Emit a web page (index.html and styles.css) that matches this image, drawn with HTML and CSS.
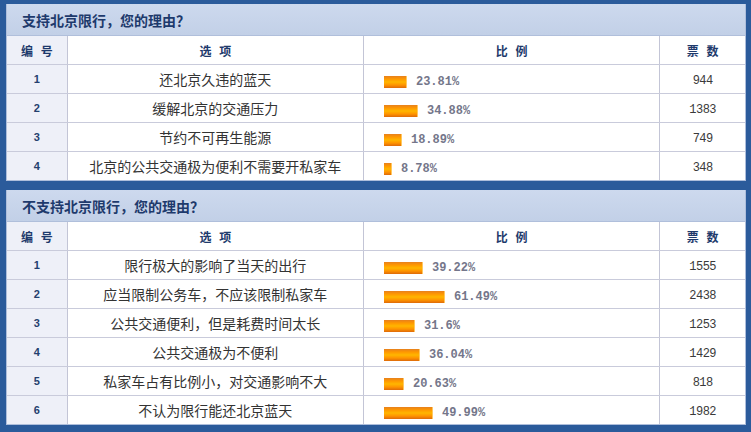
FILE: index.html
```html
<!DOCTYPE html>
<html lang="zh-CN">
<head>
<meta charset="utf-8">
<title>北京限行调查</title>
<link rel="stylesheet" href="styles.css">
</head>
<body>
<div class="page">
  <section class="poll">
    <h2 class="poll-title">支持北京限行，您的理由？</h2>
    <table class="poll-table">
      <colgroup><col class="col-no"><col class="col-opt"><col class="col-ratio"><col class="col-votes"></colgroup>
      <thead>
        <tr><th class="c-no">编 号</th><th>选 项</th><th>比 例</th><th>票 数</th></tr>
      </thead>
      <tbody>
        <tr><td class="c-no">1</td><td class="c-opt">还北京久违的蓝天</td><td class="c-ratio"><span class="bar" style="width:23px"></span><span class="pct">23.81%</span></td><td class="c-votes">944</td></tr>
        <tr><td class="c-no">2</td><td class="c-opt">缓解北京的交通压力</td><td class="c-ratio"><span class="bar" style="width:34px"></span><span class="pct">34.88%</span></td><td class="c-votes">1383</td></tr>
        <tr><td class="c-no">3</td><td class="c-opt">节约不可再生能源</td><td class="c-ratio"><span class="bar" style="width:18px"></span><span class="pct">18.89%</span></td><td class="c-votes">749</td></tr>
        <tr><td class="c-no">4</td><td class="c-opt">北京的公共交通极为便利不需要开私家车</td><td class="c-ratio"><span class="bar" style="width:8px"></span><span class="pct">8.78%</span></td><td class="c-votes">348</td></tr>
      </tbody>
    </table>
  </section>
  <section class="poll">
    <h2 class="poll-title">不支持北京限行，您的理由？</h2>
    <table class="poll-table">
      <colgroup><col class="col-no"><col class="col-opt"><col class="col-ratio"><col class="col-votes"></colgroup>
      <thead>
        <tr><th class="c-no">编 号</th><th>选 项</th><th>比 例</th><th>票 数</th></tr>
      </thead>
      <tbody>
        <tr><td class="c-no">1</td><td class="c-opt">限行极大的影响了当天的出行</td><td class="c-ratio"><span class="bar" style="width:39px"></span><span class="pct">39.22%</span></td><td class="c-votes">1555</td></tr>
        <tr><td class="c-no">2</td><td class="c-opt">应当限制公务车，不应该限制私家车</td><td class="c-ratio"><span class="bar" style="width:61px"></span><span class="pct">61.49%</span></td><td class="c-votes">2438</td></tr>
        <tr><td class="c-no">3</td><td class="c-opt">公共交通便利，但是耗费时间太长</td><td class="c-ratio"><span class="bar" style="width:31px"></span><span class="pct">31.6%</span></td><td class="c-votes">1253</td></tr>
        <tr><td class="c-no">4</td><td class="c-opt">公共交通极为不便利</td><td class="c-ratio"><span class="bar" style="width:36px"></span><span class="pct">36.04%</span></td><td class="c-votes">1429</td></tr>
        <tr><td class="c-no">5</td><td class="c-opt">私家车占有比例小，对交通影响不大</td><td class="c-ratio"><span class="bar" style="width:20px"></span><span class="pct">20.63%</span></td><td class="c-votes">818</td></tr>
        <tr><td class="c-no">6</td><td class="c-opt">不认为限行能还北京蓝天</td><td class="c-ratio"><span class="bar" style="width:49px"></span><span class="pct">49.99%</span></td><td class="c-votes">1982</td></tr>
      </tbody>
    </table>
  </section>
</div>
</body>
</html>
```
FILE: styles.css
```css
html, body {
  margin: 0;
  padding: 0;
  background: #2b5b9b;
}
body {
  font-family: "Noto Sans CJK SC", "Noto Sans", sans-serif;
  color: #333;
}
.page {
  display: flex;
  flex-direction: column;
  gap: 9px;
  padding: 4px 5px 6px 6px;
}
.poll {
  background: #fff;
  border: 1px solid #aebedb;
  border-top: none;
}
.poll-title {
  margin: 0;
  height: 31px;
  line-height: 33px;
  padding-left: 15px;
  background: linear-gradient(to bottom, #cdd9ee, #c2d0e7);
  border-bottom: 1px solid #b0bfdb;
  font-size: 14px;
  font-weight: bold;
  color: #1e3a6c;
}
.poll-table {
  width: 100%;
  border-collapse: collapse;
  table-layout: fixed;
}
.col-no { width: 60px; }
.col-opt { width: 296px; }
.col-ratio { width: 296px; }
.col-votes { width: 85px; }
.poll-table th,
.poll-table td {
  height: 28px;
  padding: 0;
  border-bottom: 1px solid #c9cbdb;
  border-left: 1px solid #c3c5d6;
  text-align: center;
  vertical-align: middle;
}
.poll-table tr > :first-child { border-left: none; }
.poll-table tbody tr:last-child td { border-bottom: none; }
.poll-table th {
  font-size: 12px;
  font-weight: bold;
  color: #1e3a6c;
  word-spacing: 5px;
}
.poll-table .c-no {
  background: #eef0f8;
}
td.c-no {
  font-family: "Liberation Sans", Arial, sans-serif;
  font-size: 11px;
  font-weight: bold;
  color: #243f6e;
}
.c-opt {
  font-size: 14px;
  color: #333;
}
.poll-table td.c-ratio {
  text-align: left;
  padding-left: 20px;
}
.bar {
  display: inline-block;
  vertical-align: middle;
  height: 12px;
  background: linear-gradient(to bottom, #e6801e 0%, #ff9800 25%, #ffb600 50%, #ff9400 75%, #de6a0a 100%);
  border-right: 1px solid #ffc860;
  box-sizing: border-box;
  margin-right: 9px;
}
.pct {
  display: inline-block;
  vertical-align: middle;
  font-family: "Liberation Mono", "Courier New", monospace;
  font-size: 12px;
  font-weight: bold;
  color: #74768a;
}
.poll-table td.c-votes {
  font-family: "Liberation Mono", "Courier New", monospace;
  font-size: 12px;
  letter-spacing: -0.5px;
  color: #3a3a3a;
  padding-top: 3px;
  height: 25px;
}
```
